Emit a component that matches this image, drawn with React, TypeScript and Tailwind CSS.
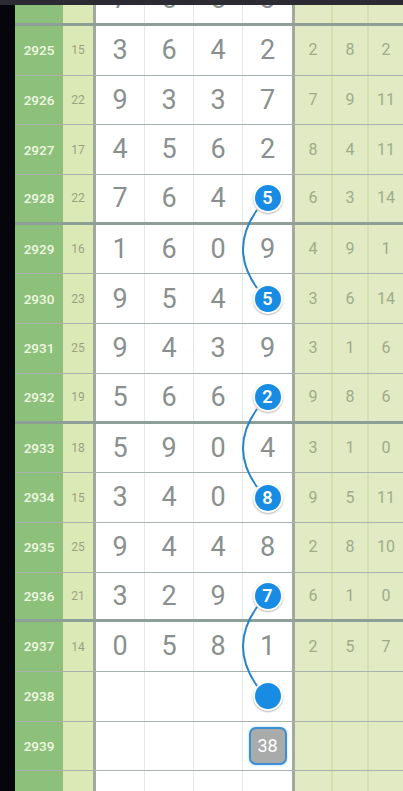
import React from 'react';

type Mark = number | 'dot' | 'box';

interface RowData {
  issue: string;
  sum?: number;
  digits: (number | null)[];
  tail?: number[];
  mark?: Mark;
}

const rows: RowData[] = [
  { issue: '', digits: [7, 5, 5, 3] },
  { issue: '2925', sum: 15, digits: [3, 6, 4, 2], tail: [2, 8, 2] },
  { issue: '2926', sum: 22, digits: [9, 3, 3, 7], tail: [7, 9, 11] },
  { issue: '2927', sum: 17, digits: [4, 5, 6, 2], tail: [8, 4, 11] },
  { issue: '2928', sum: 22, digits: [7, 6, 4, null], tail: [6, 3, 14], mark: 5 },
  { issue: '2929', sum: 16, digits: [1, 6, 0, 9], tail: [4, 9, 1] },
  { issue: '2930', sum: 23, digits: [9, 5, 4, null], tail: [3, 6, 14], mark: 5 },
  { issue: '2931', sum: 25, digits: [9, 4, 3, 9], tail: [3, 1, 6] },
  { issue: '2932', sum: 19, digits: [5, 6, 6, null], tail: [9, 8, 6], mark: 2 },
  { issue: '2933', sum: 18, digits: [5, 9, 0, 4], tail: [3, 1, 0] },
  { issue: '2934', sum: 15, digits: [3, 4, 0, null], tail: [9, 5, 11], mark: 8 },
  { issue: '2935', sum: 25, digits: [9, 4, 4, 8], tail: [2, 8, 10] },
  { issue: '2936', sum: 21, digits: [3, 2, 9, null], tail: [6, 1, 0], mark: 7 },
  { issue: '2937', sum: 14, digits: [0, 5, 8, 1], tail: [2, 5, 7] },
  { issue: '2938', digits: [null, null, null, null], mark: 'dot' },
  { issue: '2939', digits: [null, null, null, null], mark: 'box' },
  { issue: '', digits: [null, null, null, null] },
];

const Ball = ({ value }: { value?: number }) => (
  <div className="relative z-10 w-[30px] h-[30px] rounded-full border-2 border-white bg-[#178ce2] shadow-[0_1px_2px_rgba(0,0,0,0.3)] flex items-center justify-center text-white text-[18px] font-semibold leading-none">
    {value}
  </div>
);

const Box = ({ value }: { value: number }) => (
  <div className="w-[38px] h-[38px] rounded-[7px] border-2 border-[#3b8fd2] bg-[#a9abab] shadow-[0_0_3px_#9fd8ff] flex items-center justify-center text-white text-[18px] leading-none">
    {value}
  </div>
);

const Row = ({ row, index }: { row: RowData; index: number }) => {
  // every 4th issue closes a group with a heavy rule
  const thick = index % 4 === 0;
  return (
    <div
      className={`flex h-[49.7px] shrink-0 bg-white ${
        thick ? 'border-b-[3px] border-b-[rgba(50,80,65,0.55)]' : 'border-b border-b-[rgba(40,60,55,0.4)]'
      } ${index === 0 ? '-mt-[28.7px]' : ''}`}
    >
      <div className="w-[48px] bg-[#8dc07b] flex items-center justify-center text-[13.5px] text-[#eef8e0] font-medium">
        {row.issue}
      </div>
      <div className="w-[33px] bg-[#dbe9b7] border-r-[3px] border-r-[#a0aa9e] flex items-center justify-center text-[12px] text-[#9aa183]">
        {row.sum}
      </div>
      {row.digits.map((d, i) => (
        <div
          key={i}
          className={`bg-white flex items-center justify-center text-[27px] text-[#8a9090] ${
            i < 3 ? 'w-[49px] border-r border-r-[#e4e8e8]' : 'w-[52px] border-r-[3px] border-r-[#a0aa9e]'
          }`}
        >
          {i === 3 && row.mark !== undefined ? (
            row.mark === 'dot' ? (
              <Ball />
            ) : row.mark === 'box' ? (
              <Box value={38} />
            ) : (
              <Ball value={row.mark} />
            )
          ) : (
            d
          )}
        </div>
      ))}
      {[0, 1, 2].map((i) => (
        <div
          key={i}
          className={`w-[36px] bg-[#e1eac2] flex items-center justify-center text-[16px] text-[#a0aa8b] ${
            i > 0 ? 'border-l-2 border-l-[#d4e0b0]' : ''
          }`}
        >
          {row.tail ? row.tail[i] : null}
        </div>
      ))}
    </div>
  );
};

export default function App() {
  return (
    <div className="relative w-[403px] h-[791px] overflow-hidden bg-black flex flex-col font-['Roboto',sans-serif]">
      <div className="h-[5px] shrink-0 bg-[#2c2a32] relative z-20" />
      <div className="flex flex-1 min-h-0">
        <div className="w-[15px] shrink-0 bg-[#05050c]" />
        <div className="flex-1 flex flex-col overflow-hidden">
          {rows.map((row, i) => (
            <Row key={i} row={row} index={i} />
          ))}
        </div>
      </div>

      {/* links between paired balls */}
      <svg className="absolute inset-0 pointer-events-none" width="403" height="791" fill="none">
        <path d="M257 210 Q229 249 257 288" stroke="#2585c8" strokeWidth="2" />
        <path d="M257 409 Q229 448 257 487" stroke="#2585c8" strokeWidth="2" />
        <path d="M257 607 Q229 646 257 686" stroke="#2585c8" strokeWidth="2" />
      </svg>
    </div>
  );
}
